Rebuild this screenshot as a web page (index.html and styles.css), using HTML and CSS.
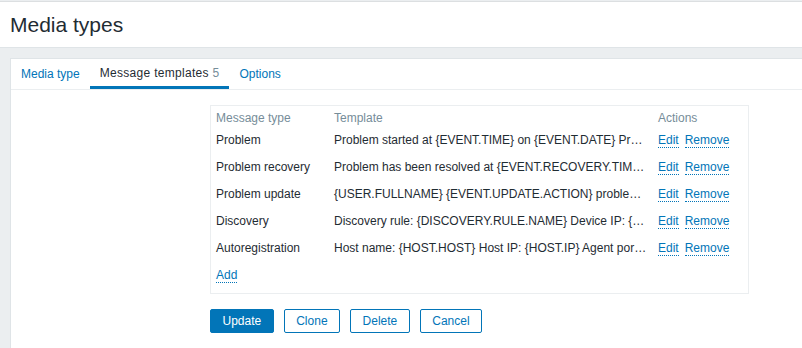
FILE: index.html
```html
<!DOCTYPE html>
<html lang="en">
<head>
    <meta charset="UTF-8">
    <meta name="viewport" content="width=device-width, initial-scale=1.0">
    <title>Media types</title>
    <link rel="stylesheet" href="styles.css">
</head>
<body>
    <!-- Page header -->
    <header class="page-header">
        <h1>Media types</h1>
    </header>

    <main class="wrapper">
        <div class="panel">
            <!-- Tabs -->
            <ul class="tabs">
                <li class="tab"><a href="#">Media type</a></li>
                <li class="tab active"><a href="#">Message templates <span class="count">5</span></a></li>
                <li class="tab"><a href="#">Options</a></li>
            </ul>

            <div class="tab-body">
                <div class="templates-box">
                    <table class="templates">
                        <colgroup>
                            <col class="col-type">
                            <col class="col-template">
                            <col class="col-actions">
                        </colgroup>
                        <thead>
                            <tr>
                                <th>Message type</th>
                                <th>Template</th>
                                <th>Actions</th>
                            </tr>
                        </thead>
                        <tbody>
                            <tr>
                                <td>Problem</td>
                                <td class="ellipsis">Problem started at {EVENT.TIME} on {EVENT.DATE} Problem name: {EVENT.NAME} Host: {HOST.NAME}</td>
                                <td class="actions"><a class="link" href="#">Edit</a><a class="link" href="#">Remove</a></td>
                            </tr>
                            <tr>
                                <td>Problem recovery</td>
                                <td class="ellipsis">Problem has been resolved at {EVENT.RECOVERY.TIME} on {EVENT.RECOVERY.DATE}</td>
                                <td class="actions"><a class="link" href="#">Edit</a><a class="link" href="#">Remove</a></td>
                            </tr>
                            <tr>
                                <td>Problem update</td>
                                <td class="ellipsis">{USER.FULLNAME} {EVENT.UPDATE.ACTION} problem at {EVENT.UPDATE.DATE}</td>
                                <td class="actions"><a class="link" href="#">Edit</a><a class="link" href="#">Remove</a></td>
                            </tr>
                            <tr>
                                <td>Discovery</td>
                                <td class="ellipsis">Discovery rule: {DISCOVERY.RULE.NAME} Device IP: {DISCOVERY.DEVICE.IPADDRESS}</td>
                                <td class="actions"><a class="link" href="#">Edit</a><a class="link" href="#">Remove</a></td>
                            </tr>
                            <tr>
                                <td>Autoregistration</td>
                                <td class="ellipsis">Host name: {HOST.HOST} Host IP: {HOST.IP} Agent port: {HOST.PORT}</td>
                                <td class="actions"><a class="link" href="#">Edit</a><a class="link" href="#">Remove</a></td>
                            </tr>
                            <tr>
                                <td colspan="3"><a class="link" href="#">Add</a></td>
                            </tr>
                        </tbody>
                    </table>
                </div>

                <!-- Form buttons -->
                <div class="buttons">
                    <button class="btn primary">Update</button>
                    <button class="btn">Clone</button>
                    <button class="btn">Delete</button>
                    <button class="btn">Cancel</button>
                </div>
            </div>
        </div>
    </main>
</body>
</html>
```

FILE: styles.css
```css
body {
    margin: 0;
    padding-top: 1px;
    font-family: "Liberation Sans", Arial, sans-serif;
    font-size: 12px;
    color: #1f2c33;
    background-color: #ebeef0;
}
a {
    text-decoration: none;
}
.page-header {
    height: 45px;
    display: flex;
    align-items: center;
    padding: 0 10px;
    background-color: #ffffff;
    border-top: 1px solid #dcdfe1;
    border-bottom: 1px solid #dfe4e7;
}
.page-header h1 {
    margin: 0;
    font-size: 21px;
    font-weight: normal;
    color: #1f2c33;
}
.wrapper {
    padding: 10px 0 0 10px;
}
.panel {
    background-color: #ffffff;
    border: 1px solid #dfe4e7;
    border-right: none;
    min-height: 300px;
}
.tabs {
    display: flex;
    margin: 0;
    padding: 0;
    list-style: none;
    border-bottom: 1px solid #ebeef0;
}
.tab a {
    display: block;
    height: 30px;
    line-height: 30px;
    padding: 0 10px;
    color: #0275b8;
    box-sizing: border-box;
}
.tab.active a {
    color: #1f2c33;
    border-bottom: 3px solid #0275b8;
    line-height: 28px;
    letter-spacing: 0.3px;
}
.count {
    color: #768d99;
}
.tab-body {
    padding: 15px 0 20px 199px;
}
.templates-box {
    width: 537px;
    border: 1px solid #ebeef0;
    padding-bottom: 4px;
}
.templates {
    width: 100%;
    table-layout: fixed;
    border-collapse: collapse;
}
.col-type {
    width: 118px;
}
.col-template {
    width: 324px;
}
.templates th {
    text-align: left;
    font-weight: normal;
    color: #768d99;
    padding: 5px 5px 2px;
    line-height: 14px;
}
.templates td {
    padding: 6px 5px;
    line-height: 15px;
    white-space: nowrap;
}
.ellipsis {
    overflow: hidden;
    text-overflow: ellipsis;
}
.actions .link + .link {
    margin-left: 6px;
}
.link {
    color: #0275b8;
    border-bottom: 1px dotted #0275b8;
}
.buttons {
    display: flex;
    gap: 10px;
    margin-top: 15px;
}
.btn {
    height: 24px;
    padding: 0 11.5px;
    font-family: inherit;
    font-size: 12px;
    color: #0275b8;
    background-color: #ffffff;
    border: 1px solid #0275b8;
    border-radius: 2px;
    cursor: pointer;
}
.btn.primary {
    color: #ffffff;
    background-color: #0275b8;
}
```
